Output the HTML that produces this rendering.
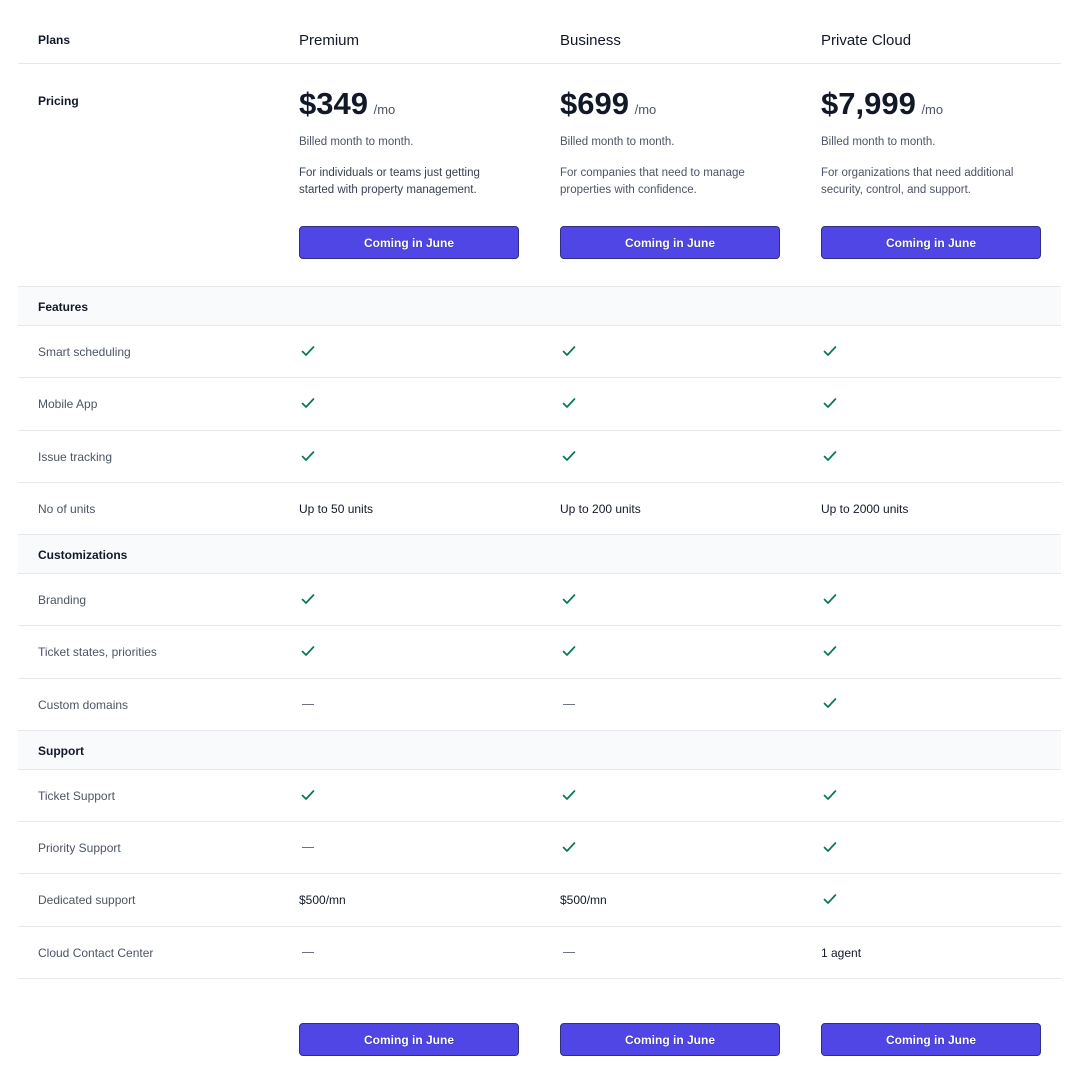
<!DOCTYPE html>
<html><head><meta charset="utf-8"><style>
*{margin:0;padding:0;box-sizing:border-box}
body{width:1070px;height:1079px;background:#fff;font-family:"Liberation Sans",sans-serif;position:relative;overflow:hidden;color:#111827}
.a{position:absolute;white-space:nowrap}
.ln{position:absolute;left:18px;width:1043px;height:1px;background:#e5e7eb}
.band{position:absolute;left:18px;width:1043px;background:#f9fafb;border-top:1px solid #e5e7eb;border-bottom:1px solid #e5e7eb}
.h{font-size:15px;color:#111827}
.sm{font-size:12px;font-weight:bold;color:#111827}
.lab{font-size:12px;color:#4b5563}
.val{font-size:12px;color:#111827}
.price{font-size:31px;font-weight:900;color:#111827;letter-spacing:0px}
.mo{font-size:13px;color:#4b5563;font-weight:normal;margin-left:-3px}
.bill{font-size:11.5px;color:#4b5563}
.desc{font-size:11.5px;color:#374151;line-height:17px;white-space:normal;width:210px}
.btn{position:absolute;width:220px;height:33px;background:#4f46e5;border:1px solid #312e81;border-radius:4px;color:#fff;font-size:12px;font-weight:bold;text-align:center;line-height:33px;text-shadow:0 0 1px #1e1b4b}
.ck{position:absolute;width:14px;height:12px}
.ds{position:absolute;width:12px;height:1px;background:#6b7280}
</style></head><body>
<div class="a sm" style="left:38px;top:33px">Plans</div>
<div class="a h" style="left:299px;top:32px">Premium</div>
<div class="a h" style="left:560px;top:32px">Business</div>
<div class="a h" style="left:821px;top:32px">Private Cloud</div>
<div class="ln" style="top:63px"></div>
<div class="a sm" style="left:38px;top:94px">Pricing</div>

<div class="a price" style="left:299px;top:86px">$349 <span class="mo">/mo</span></div>
<div class="a price" style="left:560px;top:86px">$699 <span class="mo">/mo</span></div>
<div class="a price" style="left:821px;top:86px">$7,999 <span class="mo">/mo</span></div>
<div class="a bill" style="left:299px;top:136px">Billed month to month.</div>
<div class="a bill" style="left:560px;top:136px">Billed month to month.</div>
<div class="a bill" style="left:821px;top:136px">Billed month to month.</div>
<div class="a desc" style="left:299px;top:165px">For individuals or teams just getting started with property management.</div>
<div class="a desc" style="left:560px;top:165px;color:#4b5563">For companies that need to manage properties with confidence.</div>
<div class="a desc" style="left:821px;top:165px;color:#4b5563;width:215px">For organizations that need additional security, control, and support.</div>
<div class="btn" style="left:299px;top:226px">Coming in June</div>
<div class="btn" style="left:560px;top:226px">Coming in June</div>
<div class="btn" style="left:821px;top:226px">Coming in June</div>

<div class="band" style="top:286px;height:40px"></div>
<div class="a sm" style="left:38px;top:300px">Features</div>
<div class="band" style="top:534px;height:40px"></div>
<div class="a sm" style="left:38px;top:548px">Customizations</div>
<div class="band" style="top:730px;height:40px"></div>
<div class="a sm" style="left:38px;top:744px">Support</div>

<div class="ln" style="top:377px"></div><div class="ln" style="top:430px"></div><div class="ln" style="top:482px"></div>
<div class="ln" style="top:625px"></div><div class="ln" style="top:678px"></div>
<div class="ln" style="top:821px"></div><div class="ln" style="top:873px"></div><div class="ln" style="top:926px"></div><div class="ln" style="top:978px"></div>

<svg width="0" height="0" style="position:absolute"><defs><symbol id="c" viewBox="0 0 14 12"><path d="M1.5 6.5 L5 10 L12.5 2" fill="none" stroke="#047857" stroke-width="1.7" stroke-linecap="round" stroke-linejoin="round"/></symbol></defs></svg>

<div class="a lab" style="left:38px;top:345px">Smart scheduling</div>
<div class="a lab" style="left:38px;top:397px">Mobile App</div>
<div class="a lab" style="left:38px;top:450px">Issue tracking</div>
<div class="a lab" style="left:38px;top:502px">No of units</div>
<div class="a val" style="left:299px;top:502px">Up to 50 units</div>
<div class="a val" style="left:560px;top:502px">Up to 200 units</div>
<div class="a val" style="left:821px;top:502px">Up to 2000 units</div>
<div class="a lab" style="left:38px;top:593px">Branding</div>
<div class="a lab" style="left:38px;top:645px">Ticket states, priorities</div>
<div class="a lab" style="left:38px;top:698px">Custom domains</div>
<div class="a lab" style="left:38px;top:789px">Ticket Support</div>
<div class="a lab" style="left:38px;top:841px">Priority Support</div>
<div class="a lab" style="left:38px;top:893px">Dedicated support</div>
<div class="a val" style="left:299px;top:893px">$500/mn</div>
<div class="a val" style="left:560px;top:893px">$500/mn</div>
<div class="a lab" style="left:38px;top:946px">Cloud Contact Center</div>
<div class="a val" style="left:821px;top:946px">1 agent</div>

<svg class="ck" style="left:301px;top:345px"><use href="#c"/></svg><svg class="ck" style="left:562px;top:345px"><use href="#c"/></svg><svg class="ck" style="left:823px;top:345px"><use href="#c"/></svg>
<svg class="ck" style="left:301px;top:397px"><use href="#c"/></svg><svg class="ck" style="left:562px;top:397px"><use href="#c"/></svg><svg class="ck" style="left:823px;top:397px"><use href="#c"/></svg>
<svg class="ck" style="left:301px;top:450px"><use href="#c"/></svg><svg class="ck" style="left:562px;top:450px"><use href="#c"/></svg><svg class="ck" style="left:823px;top:450px"><use href="#c"/></svg>
<svg class="ck" style="left:301px;top:593px"><use href="#c"/></svg><svg class="ck" style="left:562px;top:593px"><use href="#c"/></svg><svg class="ck" style="left:823px;top:593px"><use href="#c"/></svg>
<svg class="ck" style="left:301px;top:645px"><use href="#c"/></svg><svg class="ck" style="left:562px;top:645px"><use href="#c"/></svg><svg class="ck" style="left:823px;top:645px"><use href="#c"/></svg>
<div class="ds" style="left:302px;top:704px"></div><div class="ds" style="left:563px;top:704px"></div><svg class="ck" style="left:823px;top:697px"><use href="#c"/></svg>
<svg class="ck" style="left:301px;top:789px"><use href="#c"/></svg><svg class="ck" style="left:562px;top:789px"><use href="#c"/></svg><svg class="ck" style="left:823px;top:789px"><use href="#c"/></svg>
<div class="ds" style="left:302px;top:847px"></div><svg class="ck" style="left:562px;top:841px"><use href="#c"/></svg><svg class="ck" style="left:823px;top:841px"><use href="#c"/></svg>
<svg class="ck" style="left:823px;top:893px"><use href="#c"/></svg>
<div class="ds" style="left:302px;top:952px"></div><div class="ds" style="left:563px;top:952px"></div>

<div class="btn" style="left:299px;top:1023px">Coming in June</div>
<div class="btn" style="left:560px;top:1023px">Coming in June</div>
<div class="btn" style="left:821px;top:1023px">Coming in June</div>
</body></html>
